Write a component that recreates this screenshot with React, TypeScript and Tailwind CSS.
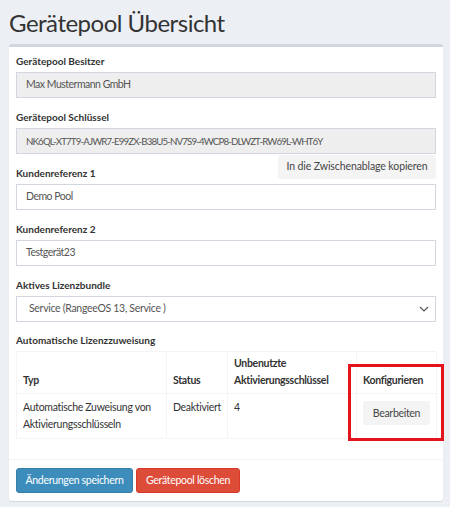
import React from "react";

function Label({ children }: { children: React.ReactNode }) {
  return (
    <label className="block text-[10px] leading-[17px] font-bold text-[#333] mb-[2px]">
      {children}
    </label>
  );
}

function Input({ value, disabled, tight }: { value: string; disabled?: boolean; tight?: boolean }) {
  return (
    <div
      className={
        "h-[26px] border border-[#d2d6de] flex items-center pl-[9px] text-[#555] " +
        (tight ? "text-[9.7px] tracking-[-0.85px] " : "text-[10.5px] tracking-[-0.5px] ") +
        (disabled ? "bg-[#eeeeee]" : "bg-white")
      }
    >
      {value}
    </div>
  );
}

export default function App() {
  return (
    <div className="[font-family:Lato,sans-serif] bg-[#ecf0f5] w-full min-h-screen">
      <div className="h-[44px] pt-[6px] pl-[9px]">
        <h1 className="text-[24px] tracking-[-0.5px] leading-[33px] text-[#333] font-normal">Gerätepool Übersicht</h1>
      </div>
      <div className="ml-[9px] w-[434px] bg-white border-t-[3px] border-[#d2d6de] rounded-[3px] shadow-[0_1px_1px_rgba(0,0,0,0.1)]">
        <div className="px-[7px] pt-[6px] pb-[20px]">
          <Label>Gerätepool Besitzer</Label>
          <Input value="Max Mustermann GmbH" disabled />
          <div className="mt-[11px]">
            <Label>Gerätepool Schlüssel</Label>
            <Input value="NK6QL-XT7T9-AJWR7-E99ZX-B38U5-NV7S9-4WCP8-DLWZT-RW69L-WHT6Y" disabled tight />
          </div>
          <div className="mt-[1px] h-[27px] flex justify-between">
            <label className="self-end block text-[10px] leading-[17px] font-bold text-[#333]">Kundenreferenz 1</label>
            <button className="self-start h-[24px] w-[158px] bg-[#f4f4f4] text-[#444] text-[10.5px] tracking-[-0.1px] rounded-[2px] whitespace-nowrap">
              In die Zwischenablage kopieren
            </button>
          </div>
          <div className="mt-[2px]">
            <Input value="Demo Pool" />
          </div>
          <div className="mt-[11px]">
            <Label>Kundenreferenz 2</Label>
            <Input value="Testgerät23" />
          </div>
          <div className="mt-[11px]">
            <Label>Aktives Lizenzbundle</Label>
            <div className="h-[26px] border border-[#d2d6de] bg-white flex items-center justify-between pl-[12px] pr-[4px] text-[10.5px] tracking-[-0.3px] text-[#555]">
              <span>Service (RangeeOS 13, Service )</span>
              <svg width="10" height="6" viewBox="0 0 10 6" className="mr-[2px]">
                <path d="M1 1 L5 5 L9 1" fill="none" stroke="#555" strokeWidth="1.2" />
              </svg>
            </div>
          </div>
          <div className="mt-[10px] relative">
            <Label>Automatische Lizenzzuweisung</Label>
            <table className="mt-[1px] w-[420px] table-fixed border-collapse border border-[#f4f4f4] text-[10.5px] tracking-[-0.3px] leading-[17px] text-[#333]">
              <colgroup>
                <col className="w-[150px]" />
                <col className="w-[61px]" />
                <col className="w-[129px]" />
                <col className="w-[80px]" />
              </colgroup>
              <thead>
                <tr>
                  <th className="border border-[#f4f4f4] align-bottom text-left font-bold px-[6px] pt-[3px] pb-[4px]">Typ</th>
                  <th className="border border-[#f4f4f4] align-bottom text-left font-bold px-[6px] pt-[3px] pb-[4px]">Status</th>
                  <th className="border border-[#f4f4f4] align-bottom text-left font-bold px-[6px] pt-[3px] pb-[4px]">
                    Unbenutzte Aktivierungsschlüssel
                  </th>
                  <th className="border border-[#f4f4f4] align-bottom text-left font-bold px-[6px] pt-[3px] pb-[4px]">Konfigurieren</th>
                </tr>
              </thead>
              <tbody>
                <tr>
                  <td className="border border-[#f4f4f4] align-top px-[6px] py-[5px]">
                    Automatische Zuweisung von Aktivierungsschlüsseln
                  </td>
                  <td className="border border-[#f4f4f4] align-top px-[6px] py-[5px]">Deaktiviert</td>
                  <td className="border border-[#f4f4f4] align-top px-[6px] py-[5px]">4</td>
                  <td className="border border-[#f4f4f4] align-top px-[6px] py-[5px]">
                    <button className="mt-[2px] h-[24px] w-[67px] bg-[#f4f4f4] text-[#444] rounded-[2px]">
                      Bearbeiten
                    </button>
                  </td>
                </tr>
              </tbody>
            </table>
            <div className="absolute left-[332px] top-[32px] w-[96px] h-[77px] border-[3px] border-[#e5131d]" />
          </div>
        </div>
        <div className="border-t border-[#f4f4f4] px-[7px] py-[8px] flex gap-[3px]">
          <button className="h-[25px] w-[117px] bg-[#3c8dbc] border border-[#367fa9] text-white text-[10.5px] tracking-[-0.3px] rounded-[3px] whitespace-nowrap">
            Änderungen speichern
          </button>
          <button className="h-[25px] w-[104px] bg-[#dd4b39] border border-[#d73925] text-white text-[10.5px] tracking-[-0.3px] rounded-[3px] whitespace-nowrap">
            Gerätepool löschen
          </button>
        </div>
      </div>
    </div>
  );
}
